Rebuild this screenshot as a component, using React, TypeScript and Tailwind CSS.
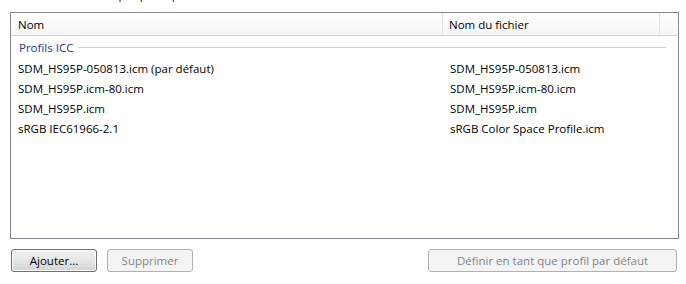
import React from "react";

const rows = [
  { name: "SDM_HS95P-050813.icm (par défaut)", file: "SDM_HS95P-050813.icm" },
  { name: "SDM_HS95P.icm-80.icm", file: "SDM_HS95P.icm-80.icm" },
  { name: "SDM_HS95P.icm", file: "SDM_HS95P.icm" },
  { name: "sRGB IEC61966-2.1", file: "sRGB Color Space Profile.icm" },
];

const App = () => {
  return (
    <div
      className="w-[686px] h-[284px] bg-white text-[11.5px] text-black overflow-hidden"
      style={{ fontFamily: '"Open Sans", "Noto Sans", sans-serif' }}
    >
      {/* label above the list, mostly scrolled out of view */}
      <div className="h-[4px] overflow-hidden pl-[10px]">
        <div className="-mt-[13px] leading-[16px] text-[#1e1e1e]">
          Profils associés à ce périphérique :
        </div>
      </div>

      {/* list view */}
      <div className="mt-[8px] ml-[10px] w-[669px] h-[227px] border border-[#828790] flex flex-col">
        <div className="h-[23px] flex border-b border-[#d5d5d5] bg-gradient-to-b from-white to-[#f6f7f9]">
          <div className="w-[432px] pl-[7px] pt-[3px] leading-[18px] border-r border-[#e3e4e6]">
            Nom
          </div>
          <div className="w-[217px] pl-[6px] pt-[3px] leading-[18px] border-r border-[#e3e4e6]">
            Nom du fichier
          </div>
          <div className="flex-1" />
        </div>

        <div className="flex items-center h-[23px] pl-[8px] pr-[12px]">
          <span className="text-[#1e3287]">Profils ICC</span>
          <div className="flex-1 h-px bg-[#ccd3df] ml-[5px]" />
        </div>

        {rows.map((r) => (
          <div key={r.name} className="flex h-[20px] leading-[20px]">
            <div className="w-[433px] pl-[7px]">{r.name}</div>
            <div className="pl-[6px]">{r.file}</div>
          </div>
        ))}
      </div>

      {/* buttons */}
      <div className="flex mt-[10px] ml-[11px] mr-[9px] h-[23px] leading-[21px]">
        <button className="w-[86px] h-[23px] rounded-[3px] border border-[#707070] bg-gradient-to-b from-[#f2f2f2] via-[#e6e6e6] to-[#d3d3d3] text-black shadow-[inset_0_0_0_1px_#fcfcfc]">
          Ajouter...
        </button>
        <button
          disabled
          className="ml-[10px] w-[86px] h-[23px] rounded-[3px] border border-[#adb2b5] bg-[#f4f4f4] text-[#838383]"
        >
          Supprimer
        </button>
        <div className="flex-1" />
        <button
          disabled
          className="w-[249px] h-[23px] rounded-[3px] border border-[#adb2b5] bg-[#f4f4f4] text-[#838383]"
        >
          Définir en tant que profil par défaut
        </button>
      </div>
    </div>
  );
};

export default App;
